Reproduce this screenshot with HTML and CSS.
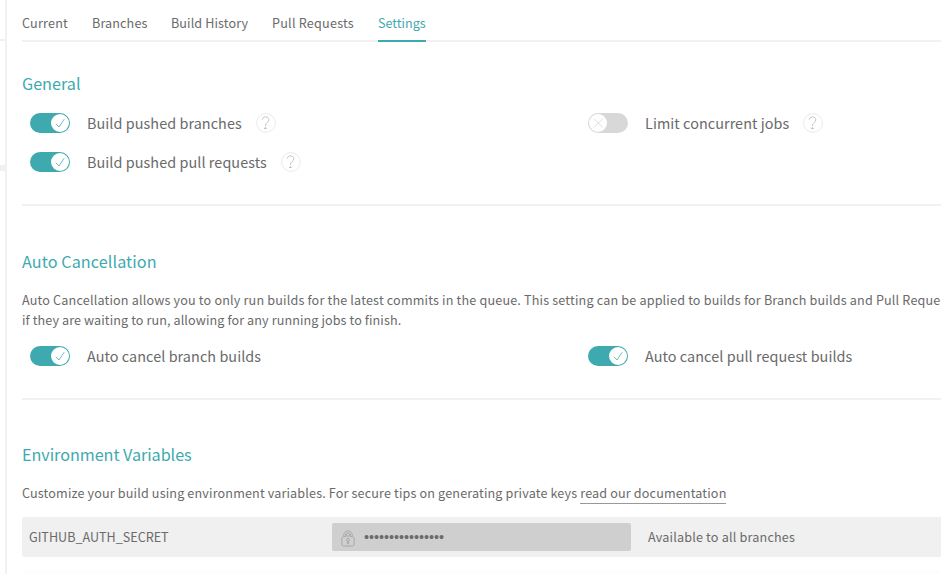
FILE: index.html
```html
<!DOCTYPE html>
<html lang="en">
<head>
<meta charset="utf-8">
<title>Settings</title>
<link rel="stylesheet" href="styles.css">
</head>
<body>
<svg class="defs" aria-hidden="true">
  <symbol id="check" viewBox="0 0 18 18"><path d="M4.8 9.8 L8 13 L13.2 5.2" fill="none" stroke="#3eaaaf" stroke-width=".75"/></symbol>
  <symbol id="cross" viewBox="0 0 18 18"><path d="M5 4.7 L13.7 13.4 M13.7 4.7 L5 13.4" fill="none" stroke="#d5d5d5" stroke-width=".8"/></symbol>
  <symbol id="help" viewBox="0 0 20 20"><circle cx="10" cy="10" r="9.4" fill="none" stroke="#ebebeb"/><path d="M6.3 6.6 C6.3 3 12.8 2.9 12.8 6.8 C12.8 9.7 9.4 9.2 9.4 13 M9.4 14 V16 M8 15.4 H10.8" fill="none" stroke="#b0b0b0" stroke-width=".75"/></symbol>
</svg>
<div class="shell">
  <aside class="sidebar"><div class="side-top"></div><div class="side-mid"></div></aside>
  <main class="main">
    <nav class="tabs">
      <a class="tab t-current">Current</a><a class="tab t-branches">Branches</a><a class="tab t-history">Build History</a><a class="tab t-pulls">Pull Requests</a><a class="tab active">Settings</a>
    </nav>
    <section class="general">
      <h2>General</h2>
      <div class="switches">
        <div class="option"><span class="switch on"><svg><use href="#check"/></svg></span><span class="label">Build pushed branches</span><svg class="help"><use href="#help"/></svg></div>
        <div class="option"><span class="switch"><svg><use href="#cross"/></svg></span><span class="label">Limit concurrent jobs</span><svg class="help"><use href="#help"/></svg></div>
        <div class="option"><span class="switch on"><svg><use href="#check"/></svg></span><span class="label">Build pushed pull requests</span><svg class="help"><use href="#help"/></svg></div>
      </div>
    </section>
    <section class="cancel">
      <h2>Auto Cancellation</h2>
      <p><span class="line-one">Auto Cancellation allows you to only run builds for the latest commits in the queue. This setting can be applied to builds for Branch builds and Pull Reques</span><br><span class="line-two">if they are waiting to run, allowing for any running jobs to finish.</span></p>
      <div class="switches">
        <div class="option"><span class="switch on"><svg><use href="#check"/></svg></span><span class="label">Auto cancel branch builds</span></div>
        <div class="option"><span class="switch on"><svg><use href="#check"/></svg></span><span class="label">Auto cancel pull request builds</span></div>
      </div>
    </section>
    <section class="env">
      <h2>Environment Variables</h2>
      <p>Customize your build using environment variables. For secure tips on generating private keys <a class="doc">read our documentation</a></p>
      <div class="variable">
        <span class="name">GITHUB_AUTH_SECRET</span>
        <span class="secret"><svg class="lock" viewBox="0 0 14 17"><path d="M2.5 6.5 C2.5 -1 11.5 -1 11.5 6.5 M4.7 6.5 C4.5 5.5 4.5 5 4.8 4 M9.3 6.5 C9.5 5.5 9.5 5 9.2 4 M2.5 6.5 H4.8 M9.2 6.5 H11.5 Q13.2 7 13.2 9 V14 Q13.2 16 11.5 16 H2.5 Q.8 16 .8 14 V9 Q.8 7 2.5 6.5"/><circle cx="7" cy="4.6" r="1.7"/><circle cx="7" cy="9.8" r="1.5"/><path d="M6.4 11.3 V13.8 H7.6 V11.3"/></svg><span class="dots">••••••••••••••••</span></span>
        <span class="scope">Available to all branches</span>
      </div>
      <div class="next-row"></div>
    </section>
  </main>
</div>
</body>
</html>
```
FILE: styles.css
```css
* { box-sizing: border-box; }
body { margin: 0; height: 574px; overflow: hidden; background: #fff; color: #6a6a6a; font: 12.6px/20px "Noto Sans CJK SC", sans-serif; }
.defs { display: none; }
.shell { display: flex; height: 574px; }
.sidebar { width: 7px; flex: none; border-right: 2px solid #f1f1f1; }
.side-top { height: 41px; border-bottom: 2px solid #f1f1f1; }
.side-mid { height: 6px; margin-top: 124px; background: #f1f1f1; }
.main { flex: 1; min-width: 0; padding-left: 15px; overflow: hidden; }
.tabs { display: flex; gap: 24px; height: 42px; padding-top: 13px; border-bottom: 2px solid #f1f1f1; }
.tab { height: 29px; white-space: nowrap; }
.t-current { width: 46px; letter-spacing: .2px; }
.t-branches { width: 55px; letter-spacing: .12px; }
.t-history { width: 77px; letter-spacing: .1px; }
.t-pulls { width: 82px; letter-spacing: .23px; }
.active { width: 48px; color: #3eaaaf; border-bottom: 2px solid #3eaaaf; }
h2 { margin: 0; font-size: 16.2px; line-height: 24px; font-weight: 400; color: #3eaaaf; }
section { border-bottom: 2px solid #f1f1f1; }
.general { height: 164px; padding-top: 29px; }
.cancel { height: 194px; padding-top: 43px; }
.cancel h2 { letter-spacing: .08px; }
.env { padding-top: 42px; border: 0; }
.env h2 { letter-spacing: -.05px; }
.switches { display: grid; grid-template-columns: 558px 1fr; grid-auto-rows: 39px; padding-left: 8px; }
.general .switches { margin-top: 8px; }
.option { display: flex; align-items: center; height: 40px; }
.switch { display: flex; width: 40px; height: 20px; padding: 1px; border-radius: 10px; background: #d8d8d8; }
.switch.on { justify-content: flex-end; background: #3eaaaf; }
.switch svg { width: 18px; height: 18px; border-radius: 50%; background: #fff; }
.label { margin-left: 17px; font-size: 14.4px; letter-spacing: .065px; white-space: nowrap; }
.help { width: 20px; height: 20px; margin-left: 14px; }
p { margin: 17px 0 0; white-space: nowrap; letter-spacing: .15px; }
.line-one { letter-spacing: .175px; }
.line-two { letter-spacing: .1px; }
.cancel .switches { margin-top: 6px; }
.doc { display: inline-block; height: 21px; border-bottom: 1px solid #999; }
.variable { display: flex; align-items: center; height: 40px; margin-top: 13px; padding-left: 7px; background: #f0f0f0; border-radius: 2px 0 0 2px; }
.name { width: 303px; }
.secret { display: flex; align-items: center; width: 299px; height: 28px; padding-left: 9px; background: #cfcfcf; border-radius: 2px; }
.lock { width: 14px; height: 17px; margin-top: 3px; fill: none; stroke: #a0a0a0; stroke-width: .8; }
.dots { margin-left: 9px; font: 14.3px/20px "Liberation Sans", sans-serif; }
.scope { margin-left: 17px; letter-spacing: .19px; }
.next-row { height: 20px; margin-top: 14px; background: #fdfdfd; }
```
